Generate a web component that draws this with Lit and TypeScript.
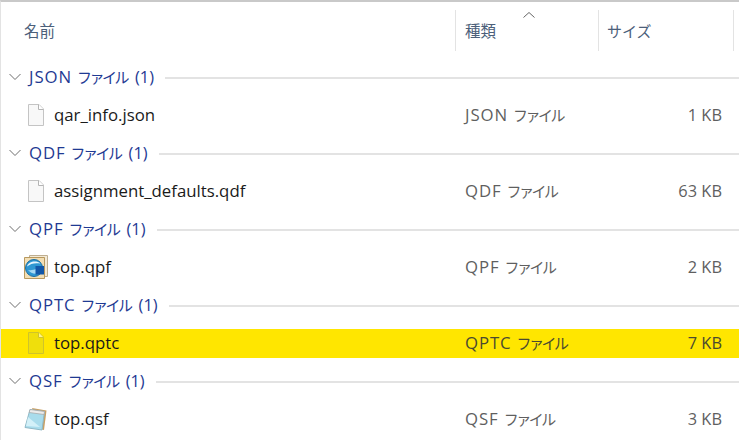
import { LitElement, html, css } from "lit";
import { customElement } from "lit/decorators.js";

type Kind = "blank" | "qpf" | "qsf";
interface Row { ext: string; name: string; size: string; icon: Kind; hi?: boolean }

const ROWS: Row[] = [
  { ext: "JSON", name: "qar_info.json", size: "1 KB", icon: "blank" },
  { ext: "QDF", name: "assignment_defaults.qdf", size: "63 KB", icon: "blank" },
  { ext: "QPF", name: "top.qpf", size: "2 KB", icon: "qpf" },
  { ext: "QPTC", name: "top.qptc", size: "7 KB", icon: "blank", hi: true },
  { ext: "QSF", name: "top.qsf", size: "3 KB", icon: "qsf" },
];

const blank = (hi?: boolean) => html`<svg width="18" height="22" viewBox="0 0 18 22">
  <path d="M1.5 .5H12L16.5 5V21.5H1.5Z" fill=${hi ? "#efdf0c" : "#f8f8f8"} stroke=${hi ? "#cfc42a" : "#c4c4c4"}/>
  <path d="M11.5 .5V5.5H16.5" fill=${hi ? "#fff38a" : "#fff"} stroke=${hi ? "#cfc42a" : "#b4b4b4"}/>
</svg>`;

const qpf = html`<svg width="26" height="26" viewBox="0 0 26 26">
  <path d="M6.5 1.5H24.5V22.5H6.5Z" fill="#f3ead6" stroke="#bfae90"/>
  <path d="M1.5 3.5H21.5V24.5H1.5Z" fill="#f2deb4" stroke="#b8995f"/>
  <circle cx="11" cy="14" r="8.5" fill="#2f97d2" stroke="#1b6ea3"/>
  <path d="M4 12.5C5.5 7.5 13 6 17.5 9.5C12 8.5 7.5 9.5 4 12.5Z" fill="#e6f5fd"/>
  <path d="M5 16C8 20 14 21 17 18L13 15C11 16 8 16.5 5 16Z" fill="#a5d9f4"/>
  <rect x="12.5" y="12" width="8.5" height="8.5" fill="#1257a8"/>
</svg>`;

const qsf = html`<svg width="26" height="26" viewBox="0 0 26 26">
  <path d="M9 2L23.5 4.5L21 24L17 23Z" fill="#c9a064"/>
  <path d="M7 3.5L21.5 5.5L19 24L2 21.5Z" fill="#a9dcec" stroke="#8fb8c6"/>
  <path d="M7 3.5L21.5 5.5L21 8.5L6.2 6.5Z" fill="#ececec" stroke="#a4a4a4" stroke-width=".7"/>
  <path d="M5 11L17 21L3 20Z" fill="#d3f0f8"/>
</svg>`;

const kind = (ext: string) =>
  html`<span class="lat">${ext}</span><span class="kana">ファイル</span>`;

@customElement("app-root")
export class AppRoot extends LitElement {
  static styles = css`
    :host {
      display: block;
      width: 739px;
      height: 440px;
      overflow: hidden;
      box-sizing: border-box;
      background: #fff;
      border-top: 2px solid #c9c9c9;
      border-left: 1px solid #e3e3e3;
      font-family: "Open Sans", "Noto Sans CJK JP", sans-serif;
      font-size: 16px;
      color: #1a1a1a;
    }
    .header {
      display: grid;
      grid-template-columns: 455px 143px 135px 1fr;
      height: 41px;
      margin-top: 8px;
      margin-bottom: 11px;
      color: #4c607a;
      position: relative;
    }
    .hcell {
      border-right: 1px solid #e3e3e3;
      display: flex;
      align-items: center;
      padding: 0 0 0 9px;
      font-size: 15.5px;
    }
    .hcell.size-h { font-size: 15px; padding-left: 8px; }
    .hcell.first { padding-left: 23px; }
    .sort { position: absolute; left: 521px; top: 1px; }
    .group {
      height: 29px;
      margin-bottom: 10px;
      display: flex;
      align-items: center;
      color: #1f3a93;
    }
    .chev { width: 28px; padding-left: 7px; box-sizing: border-box; display: flex; }
    .line { flex: 1; height: 2px; background: #e3e3e3; margin: 3px 0 0 11px; }
    .row {
      height: 29px;
      box-sizing: border-box;
      padding-bottom: 2px;
      margin-bottom: 8px;
      display: grid;
      grid-template-columns: 455px 143px 1fr;
      align-items: center;
    }
    .row.hi { background: #ffe600; }
    .name { display: flex; align-items: center; padding-left: 21px; font-size: 16.8px; line-height: 26px; }
    .ico { width: 32px; height: 26px; display: flex; align-items: center; padding-left: 5px; box-sizing: border-box; }
    .ico.big { padding-left: 1px; }
    .type { padding-left: 9px; color: #5f5f5f; }
    .size { width: 123px; text-align: right; color: #5f5f5f; font-size: 16.4px; }
    .row.hi .type, .row.hi .size { color: #4a4a30; }
    .lat { font-size: 16.8px; letter-spacing: 0.9px; margin-right: 5px; }
    .kana { font-size: 15px; letter-spacing: -2.5px; }
    .count { font-size: 16.4px; margin-left: 8px; }
  `;

  render() {
    return html`
      <div class="header">
        <div class="hcell first">名前</div>
        <div class="hcell">種類</div>
        <div class="hcell size-h">サイズ</div>
        <svg class="sort" width="14" height="8" viewBox="0 0 14 8"><path d="M1.5 6.5L7 1.5L12.5 6.5" fill="none" stroke="#666" /></svg>
      </div>
      ${ROWS.map(r => html`
        <div class="group">
          <span class="chev"><svg width="14" height="8" viewBox="0 0 14 8"><path d="M1.5 1L7 6.5L12.5 1" fill="none" stroke="#6e6e6e"/></svg></span>
          <span>${kind(r.ext)}<span class="count">(1)</span></span>
          <span class="line"></span>
        </div>
        <div class="row ${r.hi ? "hi" : ""}">
          <div class="name">
            <span class="ico ${r.icon === "blank" ? "" : "big"}">${r.icon === "blank" ? blank(r.hi) : r.icon === "qpf" ? qpf : qsf}</span>
            <span>${r.name}</span>
          </div>
          <div class="type">${kind(r.ext)}</div>
          <div class="size">${r.size}</div>
        </div>
      `)}
    `;
  }
}
